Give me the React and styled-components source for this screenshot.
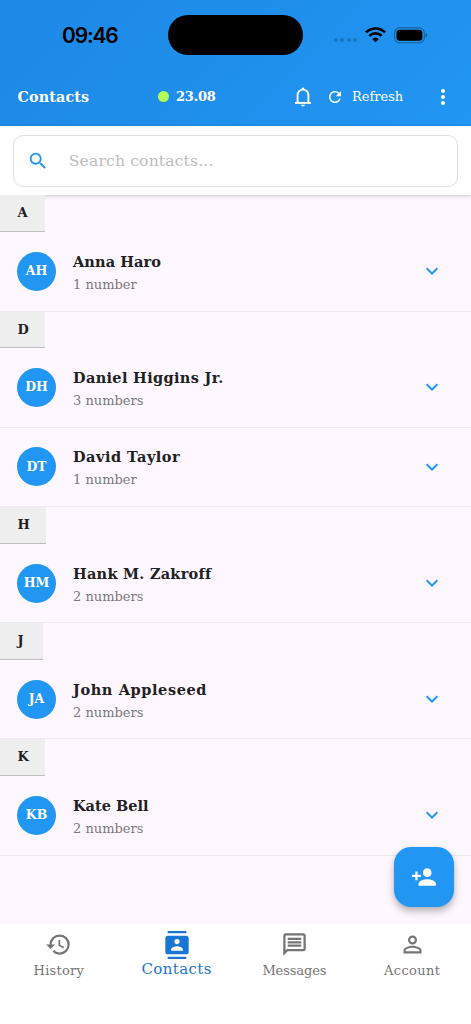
import React from "react";
import styled, { createGlobalStyle } from "styled-components";
import {
  MdSearch,
  MdRefresh,
  MdMoreVert,
  MdKeyboardArrowDown,
  MdPersonAdd,
  MdHistory,
  MdContacts,
  MdOutlineMessage,
  MdPersonOutline,
} from "react-icons/md";

const GlobalStyle = createGlobalStyle`
  * {
    box-sizing: border-box;
  }
  body {
    margin: 0;
    font-family: "DejaVu Serif", serif;
  }
`;

const Screen = styled.div`
  position: relative;
  width: 471px;
  height: 1024px;
  display: flex;
  flex-direction: column;
  overflow: hidden;
  background-color: #fef7ff;
`;

const Header = styled.header`
  height: 126.4px;
  flex: none;
  background: linear-gradient(135deg, #1e88e5, #2196f3);
`;

const StatusBar = styled.div`
  height: 70px;
  display: flex;
  align-items: center;
`;

const Clock = styled.div`
  width: 106px;
  margin-left: 62px;
  font: 600 21px Inter, sans-serif;
  letter-spacing: -1.2px;
  color: #000;
`;

const Island = styled.div`
  width: 135px;
  height: 40px;
  border-radius: 20px;
  background-color: #000;
`;

const Signal = styled.div`
  display: flex;
  gap: 2.4px;
  margin: 10px 8px 0 31px;
  i {
    width: 4px;
    height: 4px;
    border-radius: 50%;
    background-color: #1b74bd;
  }
`;

const AppBar = styled.div`
  height: 54px;
  display: flex;
  align-items: center;
  padding-left: 17.5px;
  color: white;
`;

const Text = styled.span`
  display: block;
  flex: none;
  width: ${({ $w }) => ($w ? `${$w}px` : "auto")};
  white-space: nowrap;
  font-size: ${({ $size }) => $size}px;
  font-weight: ${({ $bold }) => ($bold ? 700 : 400)};
  letter-spacing: ${({ $ls }) => $ls || 0}px;
  line-height: 20px;
`;

const Dot = styled.div`
  width: 11px;
  height: 11px;
  margin: -1px 7px 0 -0.5px;
  border-radius: 50%;
  background-color: #b2ff59;
`;

const SearchBar = styled.div`
  position: relative;
  height: 69.1px;
  flex: none;
  padding: 8.7px 13px;
  background-color: white;
  box-shadow: 0 1px 4px rgba(0, 0, 0, 0.2);
`;

const SearchBox = styled.div`
  height: 51.5px;
  display: flex;
  align-items: center;
  gap: 19.5px;
  padding-left: 13.3px;
  border: 1.2px solid #e0e0e0;
  border-radius: 10px;
  color: #bdbdbd;
  svg {
    color: #2196f3;
  }
`;

const Letter = styled.div`
  position: relative;
  width: ${({ $w }) => $w}px;
  height: 36.5px;
  padding: 8px 0 0 17.5px;
  border-bottom: 1px solid #bdbdbd;
  background-color: #eee;
  color: #212121;
`;

const Row = styled.div`
  height: 79.6px;
  display: flex;
  align-items: center;
  padding: 0 27px 0 17px;
  border-bottom: 1px solid #eee9f0;
  > svg {
    color: #2196f3;
  }
`;

const Avatar = styled.div`
  width: 39px;
  height: 39px;
  margin-right: 17px;
  display: flex;
  align-items: center;
  justify-content: center;
  border-radius: 50%;
  background-color: #2196f3;
  color: white;
`;

const Info = styled.div`
  flex: 1;
  padding-top: 4px;
  color: #212121;
  ${Text} + ${Text} {
    margin-top: 3px;
    color: #7b777c;
  }
`;

const Fab = styled.button`
  position: absolute;
  right: 17px;
  bottom: 117px;
  width: 60.5px;
  height: 60.5px;
  padding: 0;
  display: flex;
  align-items: center;
  justify-content: center;
  border: 0;
  border-radius: 17px;
  background-color: #2196f3;
  color: white;
  box-shadow: 0 3px 6px rgba(0, 0, 0, 0.22), 0 6px 10px rgba(0, 0, 0, 0.1);
`;

const BottomNav = styled.nav`
  height: 100px;
  margin-top: auto;
  display: flex;
  background-color: white;
  box-shadow: 0 -1px 6px rgba(0, 0, 0, 0.025);
`;

const Tab = styled.div`
  flex: 1;
  display: flex;
  flex-direction: column;
  align-items: center;
  padding-top: 7px;
  gap: ${({ $active }) => ($active ? 0 : 3)}px;
  color: ${({ $active }) => ($active ? "#1976d2" : "#757575")};
`;

const sections = [
  { letter: "A", w: 44.5, people: [["AH", "Anna Haro", "1 number", 0.1]] },
  {
    letter: "D",
    w: 45.3,
    people: [
      ["DH", "Daniel Higgins Jr.", "3 numbers", 0.33],
      ["DT", "David Taylor", "1 number", 0.5],
    ],
  },
  { letter: "H", w: 46, people: [["HM", "Hank M. Zakroff", "2 numbers", 0.25]] },
  { letter: "J", w: 43, people: [["JA", "John Appleseed", "2 numbers", 0.6]] },
  { letter: "K", w: 45.3, people: [["KB", "Kate Bell", "2 numbers", 0]] },
];

const tabs = [
  { label: "History", Icon: MdHistory, ls: 0.25 },
  { label: "Contacts", Icon: MdContacts, ls: 0.4, active: true },
  { label: "Messages", Icon: MdOutlineMessage, ls: -0.1 },
  { label: "Account", Icon: MdPersonOutline, ls: 0.35 },
];

const Wifi = () => (
  <svg width="21" height="16" viewBox="0 0 21 16">
    <g fill="none" stroke="#000" strokeWidth="2.6">
      <path d="M1 5.4a13.6 13.6 0 0 1 19 0" />
      <path d="M4.4 8.9a8.7 8.7 0 0 1 12.2 0" />
    </g>
    <path d="M7.2 12a4.8 4.8 0 0 1 6.6 0l-3.3 3.3z" />
  </svg>
);

const Battery = () => (
  <svg width="34" height="17" viewBox="0 0 34 17">
    <rect x="0.6" y="0.9" width="29.6" height="14.8" rx="4.8" fill="none" stroke="#15609c" strokeWidth="1.1" />
    <rect x="2.5" y="2.8" width="25.8" height="11" rx="3" />
    <path d="M31.5 5.8q1.8.8 1.8 2.5t-1.8 2.5z" fill="#15609c" />
  </svg>
);

const Bell = () => (
  <svg width="18" height="20" viewBox="0 0 18 20">
    <g fill="none" stroke="white" strokeWidth="1.9">
      <path d="M3.6 15.5V8a5.4 5.4 0 0 1 10.8 0v7.5" />
      <path d="M1 15.9h16" />
    </g>
    <path d="M7.6 3V1.8a1.4 1.4 0 0 1 2.8 0V3zM7.1 17.7h3.8a1.9 1.7 0 0 1-3.8 0z" fill="white" />
  </svg>
);

const StatusIcons = styled.div`
  display: flex;
  align-items: center;
  gap: 8px;
`;

const Actions = styled.div`
  display: flex;
  align-items: center;
  margin-left: auto;
  padding-right: 16.5px;
  svg + svg {
    margin: -1px 0 0 14px;
  }
  span {
    margin: 0 26.5px 0 8.5px;
  }
`;

const App = () => {
  return (
    <>
      <GlobalStyle />
      <Screen>
        <Header>
          <StatusBar>
            <Clock>09:46</Clock>
            <Island />
            <Signal>
              <i />
              <i />
              <i />
              <i />
            </Signal>
            <StatusIcons>
              <Wifi />
              <Battery />
            </StatusIcons>
          </StatusBar>
          <AppBar>
            <Text $size={14.3} $bold $w={141} $ls={0.15}>
              Contacts
            </Text>
            <Dot />
            <Text $size={13} $bold $ls={-0.2}>
              23.08
            </Text>
            <Actions>
              <Bell />
              <MdRefresh size={18} />
              <Text $size={13} $w={52}>
                Refresh
              </Text>
              <MdMoreVert size={24} />
            </Actions>
          </AppBar>
        </Header>
        <SearchBar>
          <SearchBox>
            <MdSearch size={22} />
            <Text $size={15.5} $ls={0.2}>
              Search contacts...
            </Text>
          </SearchBox>
        </SearchBar>
        {sections.map(({ letter, w, people }) => (
          <section key={letter}>
            <Letter $w={w}>
              <Text $size={13} $bold>
                {letter}
              </Text>
            </Letter>
            {people.map(([initials, name, count, ls]) => (
              <Row key={name}>
                <Avatar>
                  <Text $size={12.5} $bold>
                    {initials}
                  </Text>
                </Avatar>
                <Info>
                  <Text $size={14.5} $bold $ls={ls}>
                    {name}
                  </Text>
                  <Text $size={13}>{count}</Text>
                </Info>
                <MdKeyboardArrowDown size={24} />
              </Row>
            ))}
          </section>
        ))}
        <BottomNav>
          {tabs.map(({ label, Icon, ls, active }) => (
            <Tab key={label} $active={active}>
              <Icon size={active ? 28 : 27} />
              <Text $size={active ? 15 : 13} $ls={ls}>
                {label}
              </Text>
            </Tab>
          ))}
        </BottomNav>
        <Fab>
          <MdPersonAdd size={26} />
        </Fab>
      </Screen>
    </>
  );
};

export default App;
